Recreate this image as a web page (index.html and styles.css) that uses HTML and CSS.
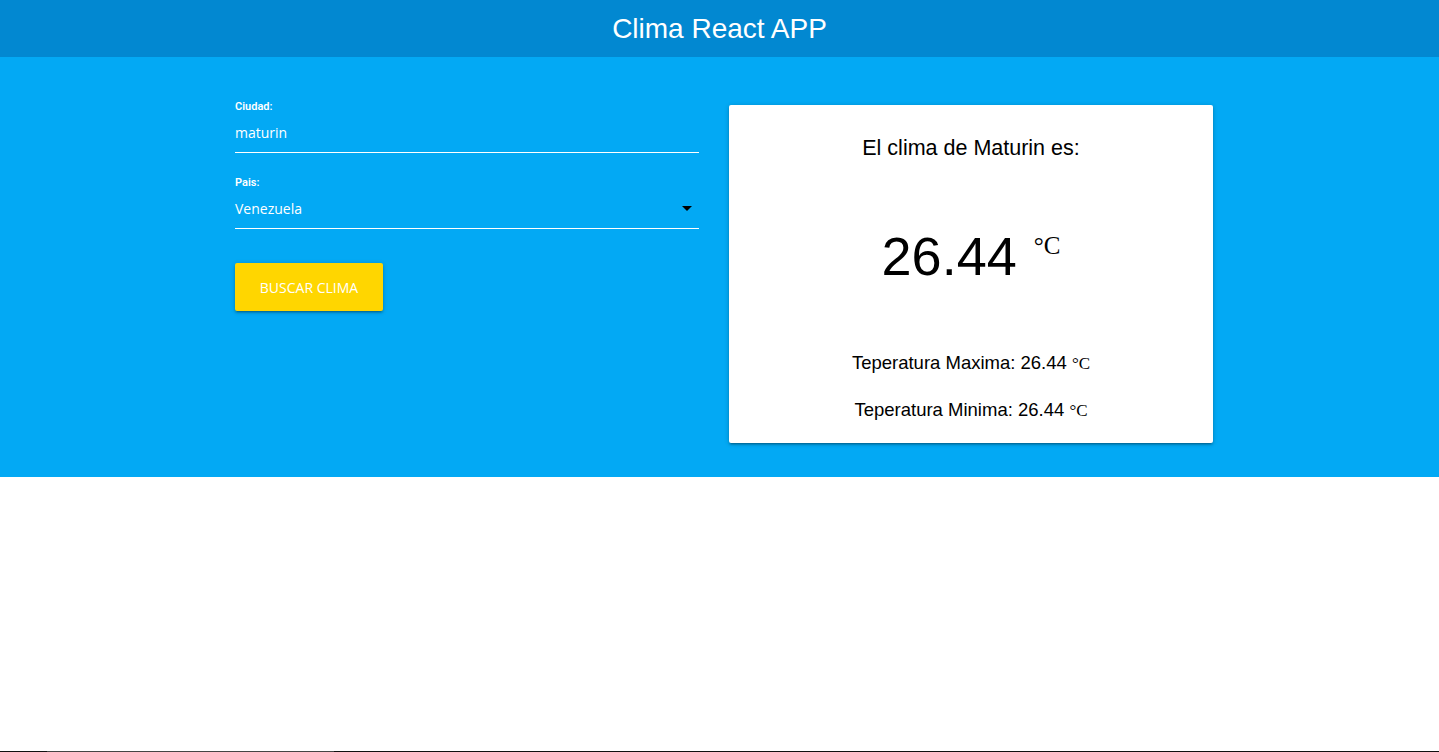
FILE: index.html
```html
<!DOCTYPE html>
<html lang="es">
<head>
<meta charset="utf-8">
<title>Clima React APP</title>
<link rel="stylesheet" href="styles.css">
</head>
<body>
<header class="topbar">
  <h1 class="brand">Clima React APP</h1>
</header>
<main class="hero">
  <div class="container">
    <form class="form">
      <label class="field-label">Ciudad:</label>
      <div class="field">maturin</div>
      <label class="field-label field-label-gap">Pais:</label>
      <div class="field field-select">
        <span>Venezuela</span>
        <svg class="caret" width="10" height="5" viewBox="0 0 10 5"><path d="M0 0h10L5 5z" fill="#000"/></svg>
      </div>
      <button type="button" class="btn">BUSCAR CLIMA</button>
    </form>
    <section class="card">
      <h2 class="card-title">El clima de Maturin es:</h2>
      <div class="temp">
        <span class="temp-value">26.44</span>
        <span class="temp-unit">°C</span>
      </div>
      <p class="minmax minmax-first">Teperatura Maxima: 26.44 <span class="unit-small">°C</span></p>
      <p class="minmax">Teperatura Minima: 26.44 <span class="unit-small">°C</span></p>
    </section>
  </div>
</main>
<div class="bottom-line"><span class="bottom-thumb"></span></div>
</body>
</html>
```

FILE: styles.css
```css
html, body {
  margin: 0;
  padding: 0;
  background: #ffffff;
}
body {
  font-family: "Liberation Sans", Arial, sans-serif;
  color: #000;
}
.topbar {
  background: #0288d1;
  height: 57px;
}
.brand {
  margin: 0;
  text-align: center;
  color: #ffffff;
  font-family: "Liberation Sans", Arial, sans-serif;
  font-weight: 400;
  font-size: 28px;
  line-height: 57px;
}
.hero {
  background: #03a9f4;
  padding: 44px 0 34px;
}
.container {
  width: 978px;
  margin: 0 auto;
  padding: 0 10px 0 19px;
  display: flex;
  align-items: flex-start;
  gap: 30px;
}
.form {
  width: 464px;
  display: flex;
  flex-direction: column;
  align-items: flex-start;
}
.field-label {
  display: block;
  font-family: Roboto, "Liberation Sans", sans-serif;
  font-weight: 600;
  font-size: 11px;
  line-height: 12px;
  color: #ffffff;
}
.field-label-gap {
  margin-top: 24px;
}
.field {
  width: 464px;
  height: 38px;
  padding-top: 1px;
  border-bottom: 1px solid #ffffff;
  color: #ffffff;
  font-family: "Open Sans", sans-serif;
  font-size: 14px;
  line-height: 38px;
  display: flex;
  align-items: center;
  justify-content: space-between;
  box-sizing: content-box;
}
.caret {
  margin-right: 7px;
  margin-top: -2px;
}
.btn {
  margin-top: 34px;
  width: 148px;
  height: 48px;
  background: #ffd600;
  border: none;
  border-radius: 2px;
  color: #ffffff;
  font-family: "Open Sans", sans-serif;
  font-size: 14px;
  padding: 0;
  box-shadow: 0 2px 2px 0 rgba(0,0,0,.14), 0 3px 1px -2px rgba(0,0,0,.12), 0 1px 5px 0 rgba(0,0,0,.2);
}
.card {
  width: 484px;
  margin-top: 4px;
  background: #ffffff;
  border-radius: 2px;
  box-shadow: 0 2px 2px 0 rgba(0,0,0,.14), 0 3px 1px -2px rgba(0,0,0,.12), 0 1px 5px 0 rgba(0,0,0,.2);
  display: flex;
  flex-direction: column;
  align-items: center;
  padding: 28px 0 21px;
}
.card-title {
  margin: 0;
  font-weight: 400;
  font-size: 21.5px;
  line-height: 30px;
}
.temp {
  margin-top: 61px;
  display: flex;
  align-items: flex-start;
  gap: 17px;
  height: 64px;
}
.temp-value {
  font-size: 54px;
  line-height: 64px;
}
.temp-unit {
  font-family: "Liberation Serif", "Times New Roman", serif;
  font-size: 25px;
  line-height: 26px;
  margin-top: 9px;
}
.minmax {
  margin: 23px 0 0;
  font-size: 18.5px;
  line-height: 24px;
  height: 24px;
}
.minmax-first {
  margin-top: 63px;
}
.unit-small {
  font-family: "Liberation Serif", "Times New Roman", serif;
  font-size: 17px;
  line-height: 1;
}
.bottom-line {
  position: fixed;
  left: 0;
  right: 0;
  bottom: 0;
  height: 1px;
  background: #111111;
}
.bottom-thumb {
  position: absolute;
  left: 47px;
  width: 287px;
  top: 0;
  height: 1px;
  background: #444444;
}
```
